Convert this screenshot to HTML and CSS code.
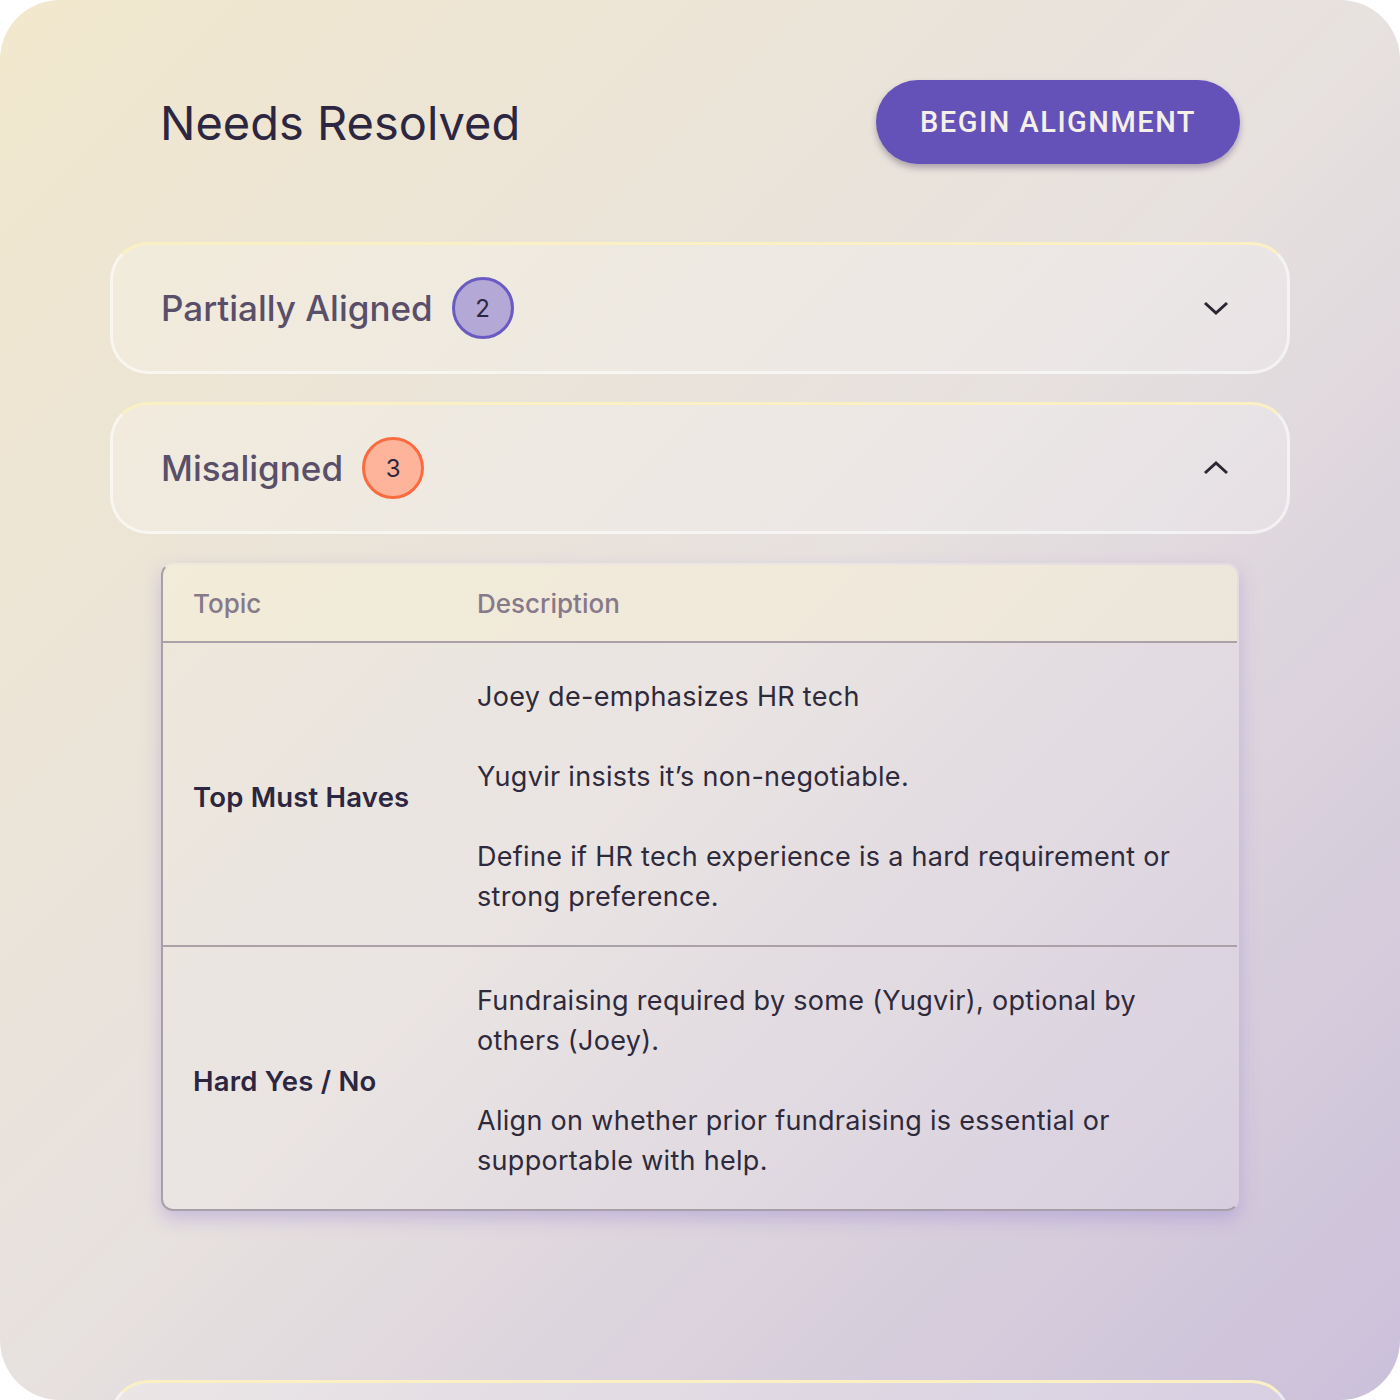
FILE: index.html
```html
<!DOCTYPE html>
<html lang="en">
<head>
    <meta charset="UTF-8">
    <meta name="viewport" content="width=device-width, initial-scale=1.0">
    <title>Needs Resolved</title>
    <link rel="stylesheet" href="styles.css">
</head>
<body>
    <div class="screen">
        <header class="top">
            <h1>Needs Resolved</h1>
            <button class="btn-begin">BEGIN ALIGNMENT</button>
        </header>

        <section class="panel">
            <div class="panel-head">
                <h2>Partially Aligned</h2>
                <span class="count count-partial">2</span>
            </div>
            <svg class="chevron" width="28" height="16" viewBox="0 0 28 16">
                <polyline points="3,3 14,13 25,3" />
            </svg>
        </section>

        <section class="panel">
            <div class="panel-head">
                <h2>Misaligned</h2>
                <span class="count count-mis">3</span>
            </div>
            <svg class="chevron" width="28" height="16" viewBox="0 0 28 16">
                <polyline points="3,13 14,3 25,13" />
            </svg>
        </section>

        <div class="table-card">
            <table>
                <thead>
                    <tr>
                        <th class="col-topic">Topic</th>
                        <th>Description</th>
                    </tr>
                </thead>
                <tbody>
                    <tr>
                        <td class="topic">Top Must Haves</td>
                        <td class="desc">
                            <p>Joey de-emphasizes HR tech</p>
                            <p>Yugvir insists it’s non-negotiable.</p>
                            <p>Define if HR tech experience is a hard requirement or strong preference.</p>
                        </td>
                    </tr>
                    <tr>
                        <td class="topic">Hard Yes / No</td>
                        <td class="desc">
                            <p>Fundraising required by some (Yugvir), optional by others (Joey).</p>
                            <p>Align on whether prior fundraising is essential or supportable with help.</p>
                        </td>
                    </tr>
                </tbody>
            </table>
        </div>

        <section class="panel panel-last"></section>
    </div>
</body>
</html>
```

FILE: styles.css
```css
body {
    margin: 0;
    background: #ffffff;
    font-family: Inter, "Noto Sans", sans-serif;
}

.screen {
    width: 1400px;
    height: 1400px;
    border-radius: 60px;
    overflow: hidden;
    background: linear-gradient(135deg, #f1e8cd 0%, #e7e1df 50%, #cbc0da 100%);
    display: flex;
    flex-direction: column;
    box-sizing: border-box;
    padding-top: 80px;
}
.screen > * {
    flex-shrink: 0;
}

/* header */
.top {
    display: flex;
    align-items: center;
    justify-content: space-between;
    padding: 0 160px 0 160px;
    height: 84px;
}
.top h1 {
    margin: 0;
    font-size: 47px;
    font-weight: 400;
    color: #2d2641;
}
.btn-begin {
    height: 84px;
    padding: 0 44px;
    border: none;
    border-radius: 42px;
    background: #6452b9;
    color: #f4f0e8;
    font-family: Roboto, sans-serif;
    font-size: 29px;
    font-weight: 500;
    letter-spacing: 1.5px;
    box-shadow: 0 4px 6px rgba(60, 40, 90, 0.35);
}

/* accordion panels */
.panel {
    margin: 78px 110px 0;
    height: 132px;
    box-sizing: border-box;
    border-radius: 38px;
    border: 3px solid rgba(255, 255, 255, 0.55);
    border-top-color: #fbf0c4;
    background: rgba(255, 255, 255, 0.22);
    display: flex;
    align-items: center;
    justify-content: space-between;
    padding: 0 57px 0 48px;
}
.panel + .panel {
    margin-top: 28px;
}
.panel-head {
    display: flex;
    align-items: center;
    gap: 19px;
}
.panel-head h2 {
    margin: 0;
    font-size: 35px;
    font-weight: 500;
    color: #5a4f69;
}
.count {
    width: 62px;
    height: 62px;
    border-radius: 50%;
    box-sizing: border-box;
    display: flex;
    align-items: center;
    justify-content: center;
    font-size: 24px;
    color: #2d2641;
}
.count-partial {
    background: #b3a8d6;
    border: 3px solid #6a5bc3;
}
.count-mis {
    background: #fdb49a;
    border: 3px solid #fa6b40;
}
.chevron polyline {
    fill: none;
    stroke: #2b2631;
    stroke-width: 3;
}

/* table */
.table-card {
    margin: 29px 161px 0;
    border-radius: 12px;
    border: 2px solid #a7a0a9;
    border-top-color: transparent;
    border-right-color: transparent;
    overflow: hidden;
    background: rgba(255, 255, 255, 0.12);
    box-shadow: 0 8px 18px rgba(140, 120, 210, 0.35);
}
table {
    width: 100%;
    border-collapse: collapse;
}
th {
    text-align: left;
    font-size: 26px;
    font-weight: 500;
    color: #86798a;
    height: 76px;
    padding: 0 30px;
    background: rgba(246, 238, 214, 0.55);
    border-bottom: 2px solid #aaa2a8;
}
th.col-topic {
    width: 224px;
}
td {
    padding: 34px 30px 28px;
    vertical-align: middle;
}
tbody tr + tr td {
    border-top: 2px solid #aaa2a8;
}
td.topic {
    font-size: 27.5px;
    font-weight: 600;
    letter-spacing: 0.2px;
    color: #2c2640;
}
td.desc p {
    margin: 0;
    font-size: 27px;
    letter-spacing: 0.3px;
    line-height: 40px;
    color: #2f2a3b;
    padding-right: 20px;
}
td.desc p + p {
    margin-top: 40px;
}

.panel-last {
    margin-top: 169px;
}
```
